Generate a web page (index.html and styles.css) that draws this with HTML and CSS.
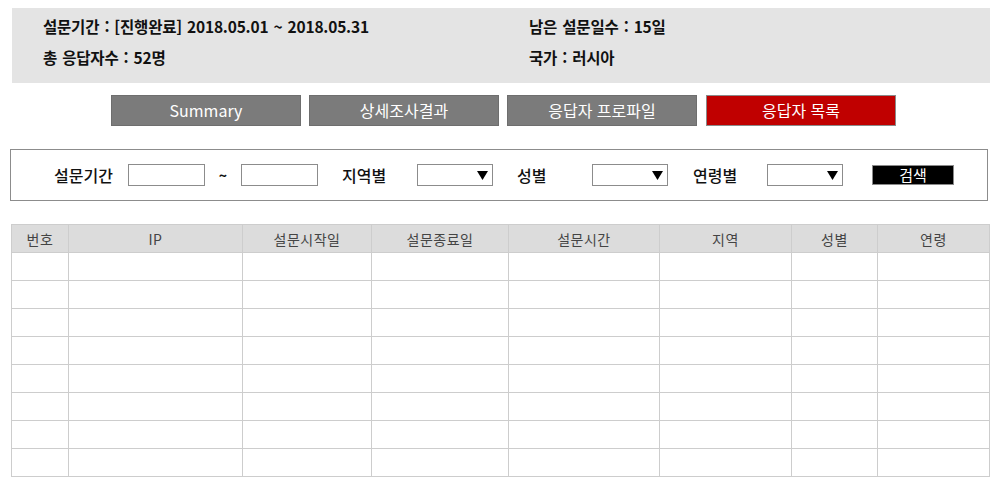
FILE: index.html
```html
<!DOCTYPE html>
<html lang="ko">
<head>
<meta charset="utf-8">
<link rel="stylesheet" href="styles.css">
</head>
<body>
<div class="info">
  <div class="info-item">설문기간 : [진행완료] 2018.05.01 ~ 2018.05.31</div>
  <div class="info-item">남은 설문일수 : 15일</div>
  <div class="info-item">총 응답자수 : 52명</div>
  <div class="info-item">국가 : 러시아</div>
</div>
<div class="tabs">
  <div class="tab">Summary</div>
  <div class="tab">상세조사결과</div>
  <div class="tab">응답자 프로파일</div>
  <div class="tab active">응답자 목록</div>
</div>
<div class="filter">
  <span class="lbl lbl-period">설문기간</span>
  <span class="inp"></span>
  <span class="tilde">~</span>
  <span class="inp"></span>
  <span class="lbl lbl-sel">지역별</span>
  <span class="sel"><svg width="11" height="9" viewBox="0 0 11 9"><path d="M0 0H11L5.5 9Z" fill="#000"/></svg></span>
  <span class="lbl lbl-sel">성별</span>
  <span class="sel"><svg width="11" height="9" viewBox="0 0 11 9"><path d="M0 0H11L5.5 9Z" fill="#000"/></svg></span>
  <span class="lbl lbl-sel lbl-age">연령별</span>
  <span class="sel"><svg width="11" height="9" viewBox="0 0 11 9"><path d="M0 0H11L5.5 9Z" fill="#000"/></svg></span>
  <span class="btn-search">검색</span>
</div>
<table class="grid">
  <colgroup>
    <col class="c1"><col class="c2"><col class="c3"><col class="c4"><col class="c5"><col class="c6"><col class="c7"><col class="c8">
  </colgroup>
  <thead>
    <tr><th>번호</th><th>IP</th><th>설문시작일</th><th>설문종료일</th><th>설문시간</th><th>지역</th><th>성별</th><th>연령</th></tr>
  </thead>
  <tbody>
    <tr><td></td><td></td><td></td><td></td><td></td><td></td><td></td><td></td></tr>
    <tr><td></td><td></td><td></td><td></td><td></td><td></td><td></td><td></td></tr>
    <tr><td></td><td></td><td></td><td></td><td></td><td></td><td></td><td></td></tr>
    <tr><td></td><td></td><td></td><td></td><td></td><td></td><td></td><td></td></tr>
    <tr><td></td><td></td><td></td><td></td><td></td><td></td><td></td><td></td></tr>
    <tr><td></td><td></td><td></td><td></td><td></td><td></td><td></td><td></td></tr>
    <tr><td></td><td></td><td></td><td></td><td></td><td></td><td></td><td></td></tr>
    <tr><td></td><td></td><td></td><td></td><td></td><td></td><td></td><td></td></tr>
  </tbody>
</table>
</body>
</html>
```
FILE: styles.css
```css
* { box-sizing: border-box; }
html, body { margin: 0; padding: 0; background: #fff; }
body {
  font-family: "Noto Sans CJK KR", "Noto Sans", sans-serif;
  color: #111;
  width: 997px;
  height: 484px;
  overflow: hidden;
}
.info {
  margin: 8px 0 0 12px;
  width: 978px;
  height: 75px;
  background: #e4e4e4;
  padding: 3px 0 0 31px;
  display: grid;
  grid-template-columns: 486px 1fr;
  grid-auto-rows: 31px;
  font-size: 15.5px;
  font-weight: 700;
  line-height: 31px;
  letter-spacing: -0.2px;
  word-spacing: 1px;
}
.tabs {
  display: flex;
  gap: 8px;
  margin: 12px 0 0 111px;
}
.tab {
  width: 190px;
  height: 31px;
  background: #7b7b7b;
  border: 1px solid #6e6e6e;
  color: #fff;
  font-size: 16px;
  line-height: 29px;
  text-align: center;
}
.tab.active {
  background: #c00000;
  border-color: #8a8a8a;
  margin-left: 1px;
}
.filter {
  margin: 23px 0 0 10px;
  width: 978px;
  height: 52px;
  border: 1px solid #8c8c8c;
  display: flex;
  align-items: center;
  padding-left: 43px;
}
.lbl {
  font-size: 16px;
  font-weight: 500;
  color: #111;
}
.lbl-period { width: 74px; }
.lbl-sel { width: 99px; padding-left: 24px; }
.lbl-age { padding-left: 25px; }
.inp {
  width: 77px;
  height: 22px;
  border: 1px solid #8c8c8c;
  background: #fff;
}
.tilde {
  width: 36px;
  text-align: center;
  font-size: 14px;
  font-weight: 700;
}
.sel {
  width: 76px;
  height: 22px;
  border: 1px solid #8c8c8c;
  display: flex;
  align-items: center;
  justify-content: flex-end;
  padding-right: 4px;
}
.btn-search {
  margin-left: 29px;
  width: 82px;
  height: 20px;
  background: #000;
  border: 1px solid #8a8a8a;
  color: #fff;
  font-size: 15px;
  line-height: 18px;
  text-align: center;
}
.grid {
  margin: 23px 0 0 11px;
  width: 978px;
  border-collapse: collapse;
  table-layout: fixed;
}
.c1 { width: 57px; }
.c2 { width: 174px; }
.c3 { width: 129px; }
.c4 { width: 137px; }
.c5 { width: 151px; }
.c6 { width: 132px; }
.c7 { width: 86px; }
.c8 { width: 112px; }
.grid th, .grid td {
  border: 1px solid #cdcdcd;
  height: 28px;
  padding: 0;
}
.grid th {
  background: #dcdcdc;
  color: #444;
  font-size: 14px;
  font-weight: 400;
  text-align: center;
  letter-spacing: 0.5px;
}
```
